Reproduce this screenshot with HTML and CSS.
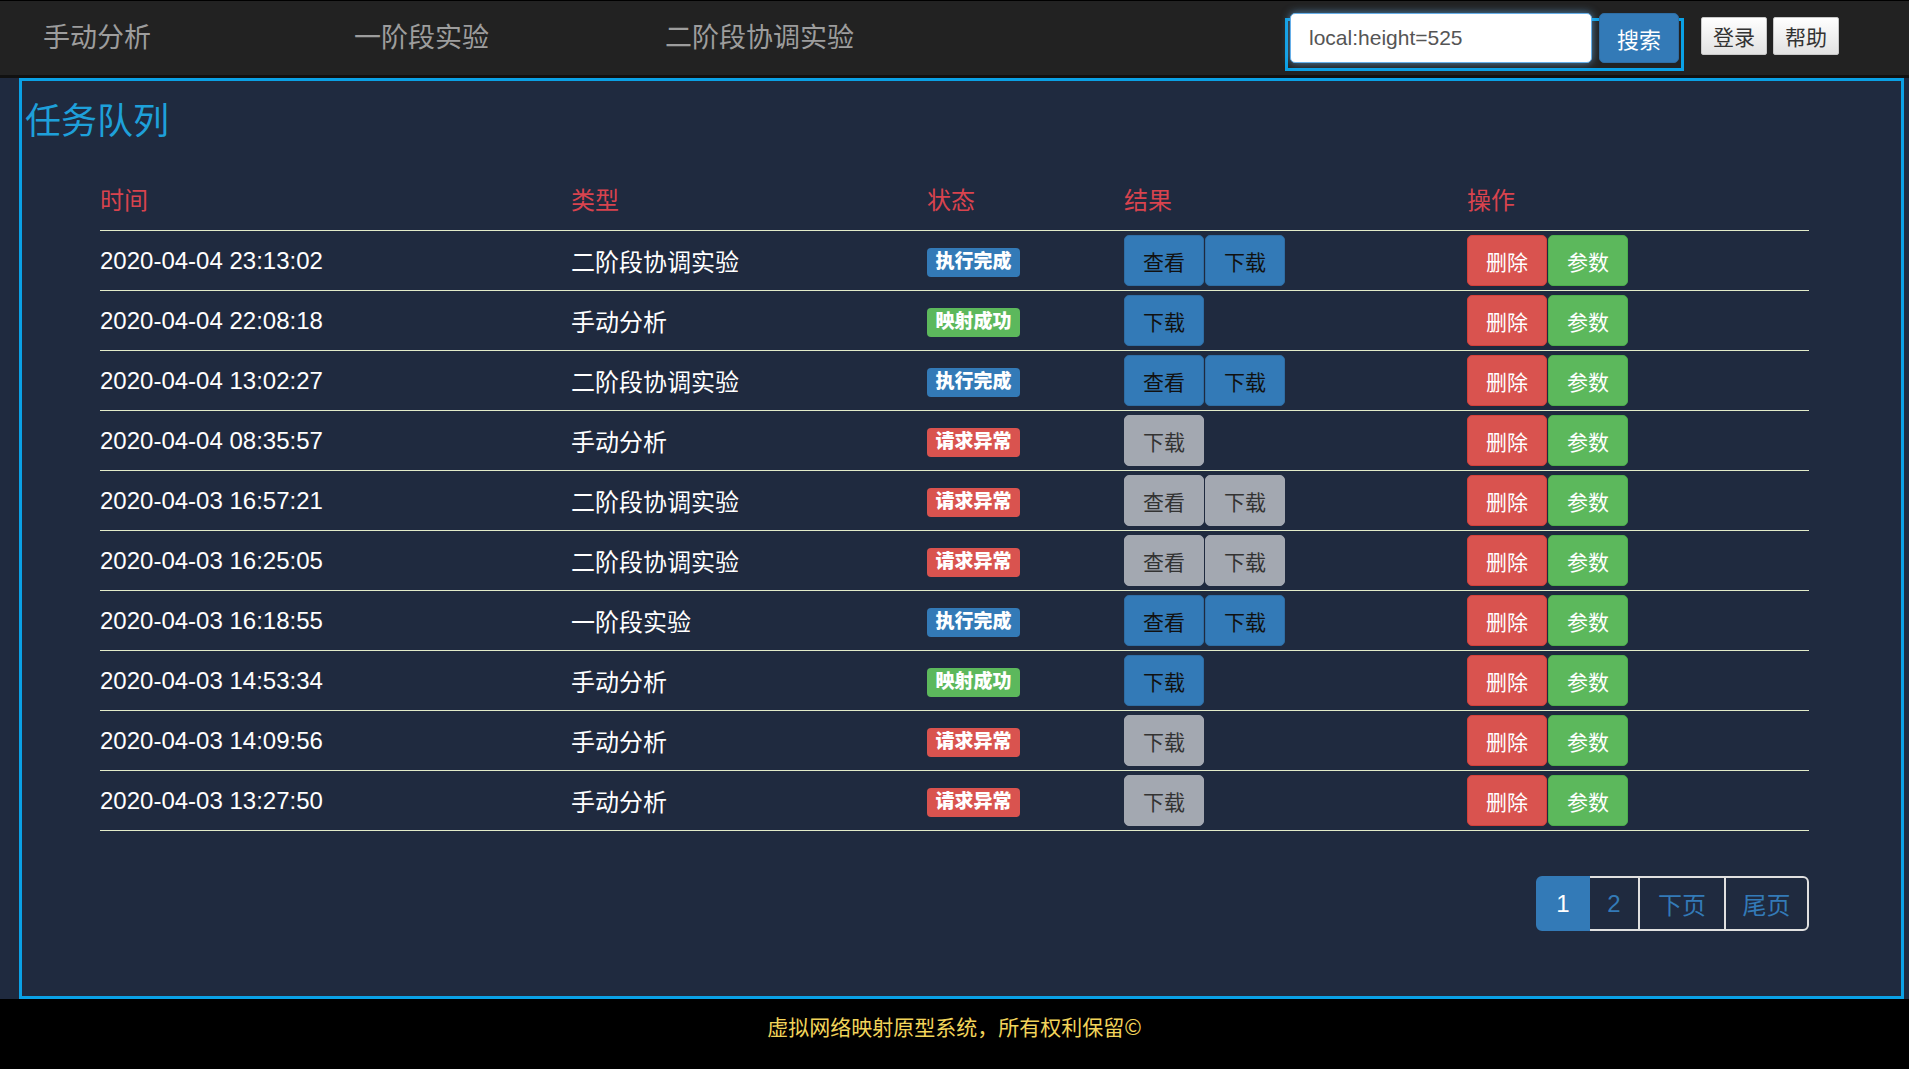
FILE: index.html
```html
<!DOCTYPE html>
<html lang="zh-CN">
<head>
<meta charset="utf-8">
<title>任务队列</title>
<link rel="stylesheet" href="styles.css">
</head>
<body>
<nav class="navbar">
  <a class="nav-item">手动分析</a>
  <a class="nav-item">一阶段实验</a>
  <a class="nav-item">二阶段协调实验</a>
  <form class="search">
    <input class="search-input" type="text" value="local:height=525">
    <button class="btn-search" type="button">搜索</button>
  </form>
  <button class="btn-default btn-login" type="button">登录</button>
  <button class="btn-default" type="button">帮助</button>
</nav>

<main class="panel">
  <h1 class="title">任务队列</h1>
  <div class="table">
    <div class="row head">
      <div>时间</div><div>类型</div><div>状态</div><div>结果</div><div>操作</div>
    </div>

    <div class="row">
      <div>2020-04-04 23:13:02</div><div>二阶段协调实验</div>
      <div><span class="badge b-blue">执行完成</span></div>
      <div class="grp"><button class="btn btn-primary">查看</button><button class="btn btn-primary">下载</button></div>
      <div class="grp"><button class="btn btn-danger">删除</button><button class="btn btn-success">参数</button></div>
    </div>
    <div class="row">
      <div>2020-04-04 22:08:18</div><div>手动分析</div>
      <div><span class="badge b-green">映射成功</span></div>
      <div class="grp"><button class="btn btn-primary">下载</button></div>
      <div class="grp"><button class="btn btn-danger">删除</button><button class="btn btn-success">参数</button></div>
    </div>
    <div class="row">
      <div>2020-04-04 13:02:27</div><div>二阶段协调实验</div>
      <div><span class="badge b-blue">执行完成</span></div>
      <div class="grp"><button class="btn btn-primary">查看</button><button class="btn btn-primary">下载</button></div>
      <div class="grp"><button class="btn btn-danger">删除</button><button class="btn btn-success">参数</button></div>
    </div>
    <div class="row">
      <div>2020-04-04 08:35:57</div><div>手动分析</div>
      <div><span class="badge b-red">请求异常</span></div>
      <div class="grp"><button class="btn btn-grey">下载</button></div>
      <div class="grp"><button class="btn btn-danger">删除</button><button class="btn btn-success">参数</button></div>
    </div>
    <div class="row">
      <div>2020-04-03 16:57:21</div><div>二阶段协调实验</div>
      <div><span class="badge b-red">请求异常</span></div>
      <div class="grp"><button class="btn btn-grey">查看</button><button class="btn btn-grey">下载</button></div>
      <div class="grp"><button class="btn btn-danger">删除</button><button class="btn btn-success">参数</button></div>
    </div>
    <div class="row">
      <div>2020-04-03 16:25:05</div><div>二阶段协调实验</div>
      <div><span class="badge b-red">请求异常</span></div>
      <div class="grp"><button class="btn btn-grey">查看</button><button class="btn btn-grey">下载</button></div>
      <div class="grp"><button class="btn btn-danger">删除</button><button class="btn btn-success">参数</button></div>
    </div>
    <div class="row">
      <div>2020-04-03 16:18:55</div><div>一阶段实验</div>
      <div><span class="badge b-blue">执行完成</span></div>
      <div class="grp"><button class="btn btn-primary">查看</button><button class="btn btn-primary">下载</button></div>
      <div class="grp"><button class="btn btn-danger">删除</button><button class="btn btn-success">参数</button></div>
    </div>
    <div class="row">
      <div>2020-04-03 14:53:34</div><div>手动分析</div>
      <div><span class="badge b-green">映射成功</span></div>
      <div class="grp"><button class="btn btn-primary">下载</button></div>
      <div class="grp"><button class="btn btn-danger">删除</button><button class="btn btn-success">参数</button></div>
    </div>
    <div class="row">
      <div>2020-04-03 14:09:56</div><div>手动分析</div>
      <div><span class="badge b-red">请求异常</span></div>
      <div class="grp"><button class="btn btn-grey">下载</button></div>
      <div class="grp"><button class="btn btn-danger">删除</button><button class="btn btn-success">参数</button></div>
    </div>
    <div class="row">
      <div>2020-04-03 13:27:50</div><div>手动分析</div>
      <div><span class="badge b-red">请求异常</span></div>
      <div class="grp"><button class="btn btn-grey">下载</button></div>
      <div class="grp"><button class="btn btn-danger">删除</button><button class="btn btn-success">参数</button></div>
    </div>

    <div class="pager">
      <a class="page active">1</a>
      <a class="page p2">2</a>
      <a class="page p3">下页</a>
      <a class="page p4">尾页</a>
    </div>
  </div>
</main>

<footer class="footer">虚拟网络映射原型系统，所有权利保留©</footer>
</body>
</html>
```

FILE: styles.css
```css
* { box-sizing: border-box; }
html, body { margin: 0; padding: 0; }
body {
  background: #1f2a3f;
  font-family: "Liberation Sans", "Noto Sans CJK SC", sans-serif;
  width: 1909px;
  height: 1069px;
  overflow: hidden;
  display: flex;
  flex-direction: column;
}

/* navbar */
.navbar {
  flex: 0 0 78px;
  background: #222222;
  border-top: 1px solid #000;
  border-bottom: 3px solid #111;
  display: flex;
  align-items: flex-start;
  padding: 0 70px 0 43px;
}
.nav-item {
  align-self: center;
  margin-top: -5px;
  width: 311px;
  font-size: 27px;
  color: #9d9d9d;
  white-space: nowrap;
}
.nav-item:nth-child(3) { width: auto; }
.search {
  margin: 17px 0 0 auto;
  height: 53px;
  border: 3px solid #0aa1e6;
  display: flex;
  align-items: flex-start;
  padding: 0 2px;
  gap: 7px;
}
.search-input {
  margin-top: -8px;
  width: 302px;
  height: 50px;
  border: 1px solid #66afe9;
  border-radius: 5px;
  box-shadow: 0 0 8px rgba(102, 175, 233, 0.7);
  background: #fff;
  padding: 0 0 0 18px;
  font-family: "Liberation Sans", sans-serif;
  font-size: 21px;
  color: #555;
  outline: none;
}
.btn-search {
  margin-top: -8px;
  width: 80px;
  height: 50px;
  border: 1px solid #2e6da4;
  border-radius: 5px;
  background: #337ab7;
  color: #fff;
  font-family: "Noto Sans CJK SC", sans-serif;
  font-size: 22px;
  padding: 0;
}
.btn-default {
  margin-top: 16px;
  width: 66px;
  height: 38px;
  border: 1px solid #c8c8c8;
  border-radius: 2px;
  background: linear-gradient(#ffffff, #e2e2e2);
  color: #333;
  font-family: "Noto Sans CJK SC", sans-serif;
  font-size: 21px;
  padding: 0;
  margin-left: 6px;
}
.btn-default.btn-login { margin-left: 17px; }

/* panel */
.panel {
  flex: 0 0 921px;
  margin: 0 5px 0 19px;
  border: 3px solid #0aa1e6;
  padding: 0 0 0 3px;
}
.title {
  margin: 21px 0 0;
  font-size: 36px;
  line-height: 40px;
  font-weight: normal;
  color: #1ea0da;
}
.table {
  margin: 28px 0 0 75px;
  width: 1709px;
}
.row {
  display: grid;
  grid-template-columns: 471px 356px 197px 343px 342px;
  align-items: center;
  height: 60px;
  border-bottom: 1px solid #e2ebc9;
  color: #fff;
  font-size: 24px;
}
.row.head {
  height: 61px;
  padding-bottom: 4px;
  color: #d9434e;
}
.grp { display: flex; gap: 1px; }

.badge {
  display: inline-block;
  margin-top: 3px;
  font-size: 19px;
  font-weight: 900;
  line-height: 24px;
  padding: 2px 8.5px 3px;
  border-radius: 4px;
  color: #fff;
}
.b-blue { background: #337ab7; }
.b-green { background: #5cb85c; }
.b-red { background: #d9534f; }

.btn {
  width: 80px;
  height: 51px;
  border-radius: 5px;
  border: 1px solid;
  font-family: "Noto Sans CJK SC", sans-serif;
  font-size: 21px;
  padding: 0;
}
.btn-primary { background: #337ab7; border-color: #2e6da4; color: #111; }
.btn-grey { background: #a3a8b1; border-color: #a3a8b1; color: #333; }
.btn-danger { background: #d9534f; border-color: #d43f3a; color: #fff; }
.btn-success { background: #5cb85c; border-color: #4cae4c; color: #fff; }

/* pager */
.pager {
  margin-top: 45px;
  display: flex;
  justify-content: flex-end;
}
.page {
  height: 55px;
  border: 2px solid #e0e0e0;
  margin-left: -2px;
  display: flex;
  align-items: center;
  justify-content: center;
  font-size: 24px;
  color: #337ab7;
}
.page.active {
  width: 54px;
  margin-left: 0;
  background: #337ab7;
  border-color: #337ab7;
  color: #fff;
  border-radius: 6px 0 0 6px;
  position: relative;
}
.page.p2 { width: 52px; }
.page.p3 { width: 88px; }
.page.p4 { width: 85px; border-radius: 0 6px 6px 0; }

/* footer */
.footer {
  flex: 1 1 auto;
  background: #000;
  color: #f2d45a;
  font-family: "Noto Sans CJK SC", sans-serif;
  font-size: 21px;
  display: flex;
  align-items: center;
  justify-content: center;
  padding-bottom: 16px;
}
```
